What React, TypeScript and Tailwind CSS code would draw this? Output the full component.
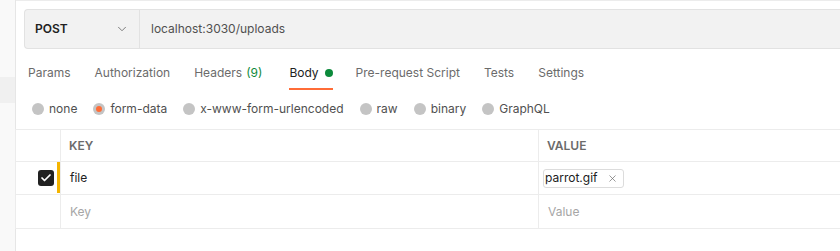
import { ChevronDown, X, Check } from "lucide-react";

const tabs = [
  { label: "Params", gap: "mr-[24px]" },
  { label: "Authorization", gap: "mr-[24px]" },
  { label: "Headers", count: "(9)", gap: "mr-[27px]" },
  { label: "Body", active: true, dot: true, gap: "mr-[23px]" },
  { label: "Pre-request Script", gap: "mr-[24px]" },
  { label: "Tests", gap: "mr-[24px]" },
  { label: "Settings", gap: "mr-[24px]" },
];

const bodyTypes = ["none", "form-data", "x-www-form-urlencoded", "raw", "binary", "GraphQL"];

export default function App() {
  return (
    <div
      className="flex w-[840px] h-[251px] overflow-hidden bg-white text-[#212121] text-[12px]"
      style={{ fontFamily: "Inter, 'Noto Sans', sans-serif" }}
    >
      {/* Left rail */}
      <div className="w-[16px] shrink-0 bg-[#f9f9f9] border-r border-[#e6e6e6] pt-[77px]">
        <div className="h-[26px] bg-[#f0f0f0]" />
      </div>

      <div className="flex-1 flex flex-col border-t border-[#ececec]">
        {/* URL bar */}
        <div className="pl-[8px] pt-[8px]">
          <div className="flex h-[40px] bg-[#f2f2f2] border border-r-0 border-[#e2e2e2] rounded-l-[4px]">
            <div className="w-[115px] flex items-center justify-between pl-[10px] pr-[10px] border-r border-[#e2e2e2]">
              <span className="font-semibold">POST</span>
              <ChevronDown size={14} strokeWidth={1.5} className="text-[#6b6b6b]" />
            </div>
            <div className="flex items-center pl-[11px] text-[#505050]">localhost:3030/uploads</div>
          </div>
        </div>

        {/* Tabs */}
        <div className="flex pl-[12px] mt-[15px] h-[26px] text-[#6b6b6b]">
          {tabs.map((t) => (
            <div
              key={t.label}
              className={`relative ${t.gap} flex items-start gap-[4px] ${t.active ? "text-[#212121]" : ""}`}
            >
              <span>{t.label}</span>
              {t.count && <span className="text-[#0f8a3c]">{t.count}</span>}
              {t.dot && <span className="mt-[5px] ml-[2px] w-[8px] h-[8px] rounded-full bg-[#0c8a3b]" />}
              {t.active && <span className="absolute left-0 right-0 bottom-0 h-[2px] bg-[#ff6c37]" />}
            </div>
          ))}
        </div>

        {/* Body types */}
        <div className="flex items-center pl-[16px] mt-[11px] h-[16px] text-[#505050]">
          {bodyTypes.map((b) => (
            <div key={b} className="flex items-center mr-[16px] gap-[5px]">
              <span className="w-[12px] h-[12px] rounded-full bg-[#c4c4c4] flex items-center justify-center">
                {b === "form-data" && <span className="w-[6px] h-[6px] rounded-full bg-[#ff6c37]" />}
              </span>
              <span>{b}</span>
            </div>
          ))}
        </div>

        {/* Table */}
        <div className="mt-[12px] -ml-px">
          <div className="grid grid-cols-[45px_478px_1fr] border-t border-b border-l border-[#ececec]">
            <div className="h-[32px] border-r border-b border-[#ececec]" />
            <div className="h-[32px] border-r border-b border-[#ececec] flex items-center pl-[8px] font-semibold text-[#6b6b6b]">
              KEY
            </div>
            <div className="h-[32px] border-b border-[#ececec] flex items-center pl-[8px] font-semibold text-[#6b6b6b]">
              VALUE
            </div>

            <div className="h-[33px] border-r border-b border-[#ececec] flex items-center justify-end">
              <span className="w-[16px] h-[16px] rounded-[3px] bg-[#212121] flex items-center justify-center mr-[3px]">
                <Check size={12} strokeWidth={3.5} className="text-white" />
              </span>
              <span className="w-[3px] h-[31px] self-start bg-[#f4b400]" />
            </div>
            <div className="h-[33px] border-r border-b border-[#ececec] flex items-center pl-[9px]">file</div>
            <div className="h-[33px] border-b border-[#ececec] flex items-center pl-[4px]">
              <span className="h-[19px] flex items-center gap-[9px] border border-[#dcdcdc] rounded-[3px] pl-[1px] pr-[5px]">
                parrot.gif
                <X size={11} strokeWidth={1.5} className="text-[#6b6b6b]" />
              </span>
            </div>

            <div className="h-[33px] border-r border-[#ececec]" />
            <div className="h-[33px] border-r border-[#ececec] flex items-center pl-[9px] text-[#a6a6a6]">Key</div>
            <div className="h-[33px] flex items-center pl-[9px] text-[#a6a6a6]">Value</div>
          </div>
        </div>
      </div>
    </div>
  );
}
